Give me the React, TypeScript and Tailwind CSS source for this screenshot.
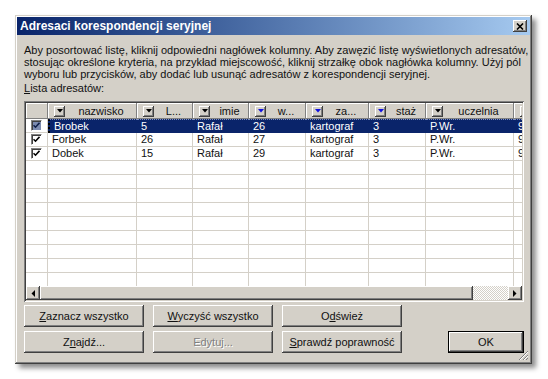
import React from "react";

const raised =
  "shadow-[inset_-1px_-1px_0_#404040,inset_1px_1px_0_#ffffff,inset_-2px_-2px_0_#808080,inset_2px_2px_0_#d4d0c8]";

type Col = { label: string; w: string; filtered: boolean };

const cols: Col[] = [
  { label: "nazwisko", w: "w-[89px]", filtered: false },
  { label: "L...", w: "w-[56px]", filtered: false },
  { label: "imie", w: "w-[56px]", filtered: false },
  { label: "w...", w: "w-[57px]", filtered: true },
  { label: "za...", w: "w-[63px]", filtered: true },
  { label: "staż", w: "w-[57px]", filtered: true },
  { label: "uczelnia", w: "w-[88px]", filtered: false },
  { label: "", w: "w-[40px]", filtered: false },
];

const rows = [
  ["Brobek", "5", "Rafał", "26", "kartograf", "3", "P.Wr.", "9"],
  ["Forbek", "26", "Rafał", "27", "kartograf", "3", "P.Wr.", "9"],
  ["Dobek", "15", "Rafał", "29", "kartograf", "3", "P.Wr.", "9"],
];

function DropBtn({ filtered }: { filtered: boolean }) {
  return (
    <span className="flex h-[11px] w-[11px] shrink-0 items-center justify-center bg-[#d4d0c8] shadow-[inset_-1px_-1px_0_#404040,inset_1px_1px_0_#ffffff,inset_-2px_-2px_0_#808080]">
      <svg width="6" height="4" viewBox="0 0 6 4">
        <path d="M0 0h6L3 3.5z" fill={filtered ? "#1010e0" : "#000"} />
      </svg>
    </span>
  );
}

function Check({ selected }: { selected: boolean }) {
  return (
    <span
      className={`flex h-[11px] w-[11px] items-center justify-center border border-[#808080] border-r-white border-b-white shadow-[inset_1px_1px_0_#404040] ${
        selected ? "bg-[#7d8cb0]" : "bg-white"
      }`}
    >
      <svg width="7" height="7" viewBox="0 0 7 7">
        <path d="M0.5 3.2l2 2 4-4.4" stroke={selected ? "#10204a" : "#000"} strokeWidth="1.6" fill="none" />
      </svg>
    </span>
  );
}

function Btn({ children, className = "" }: { children: React.ReactNode; className?: string }) {
  return (
    <button type="button" className={`flex h-[22px] w-[120px] items-center justify-center bg-[#d4d0c8] ${raised} ${className}`}>
      {children}
    </button>
  );
}

function Arrow({ dir }: { dir: "left" | "right" }) {
  return (
    <div className={`flex h-[14px] w-[14px] shrink-0 items-center justify-center bg-[#d4d0c8] ${raised}`}>
      <svg width="4" height="7" viewBox="0 0 4 7">
        <path d={dir === "left" ? "M4 0v7L0.5 3.5z" : "M0 0v7L3.5 3.5z"} fill="#000" />
      </svg>
    </div>
  );
}

export default function App() {
  const empty = Array.from({ length: 9 });
  return (
    <div className="h-[379px] w-[548px] overflow-hidden bg-white pt-[15px] pl-[15px] font-['Liberation_Sans','DejaVu_Sans',sans-serif] text-[11px] text-[#111]">
      <div className="relative h-[349px] w-[517px] bg-[#d4d0c8] p-[2px] shadow-[inset_-1px_-1px_0_#404040,inset_1px_1px_0_#d4d0c8,inset_-2px_-2px_0_#808080,inset_2px_2px_0_#ffffff,4px_4px_5px_rgba(0,0,0,0.45)]">
        {/* title bar */}
        <div className="flex h-[18px] items-center justify-between bg-linear-to-r from-[#0a246a] to-[#a6caf0] pr-[3px] pl-[3px]">
          <span className="text-[12px] font-bold leading-none text-white">Adresaci korespondencji seryjnej</span>
          <span className={`flex h-[12px] w-[14px] items-center justify-center bg-[#d4d0c8] ${raised}`}>
            <svg width="8" height="7" viewBox="0 0 8 7">
              <path d="M1 0.5l6 6M7 0.5l-6 6" stroke="#000" strokeWidth="1.6" />
            </svg>
          </span>
        </div>

        <div className="pr-[6px] pl-[7px]">
          <div className="pt-[9px] leading-[12px] whitespace-nowrap">
            <div>Aby posortować listę, kliknij odpowiedni nagłówek kolumny. Aby zawęzić listę wyświetlonych adresatów,</div>
            <div>stosując określone kryteria, na przykład miejscowość, kliknij strzałkę obok nagłówka kolumny. Użyj pól</div>
            <div>wyboru lub przycisków, aby dodać lub usunąć adresatów z korespondencji seryjnej.</div>
          </div>
          <div className="mt-[2px] leading-[12px]">
            <span className="underline">L</span>ista adresatów:
          </div>

          {/* list */}
          <div className="mt-[7px] flex h-[201px] w-[500px] flex-col bg-white p-[2px] shadow-[inset_1px_1px_0_#808080,inset_-1px_-1px_0_#ffffff,inset_2px_2px_0_#404040,inset_-2px_-2px_0_#d4d0c8]">
            <div className="flex h-[16px] shrink-0 overflow-hidden">
              <div className="w-[22px] shrink-0 bg-[#d4d0c8] shadow-[inset_-1px_-1px_0_#808080,inset_1px_1px_0_#ffffff]" />
              {cols.map((c, i) => (
                <div
                  key={i}
                  className={`${c.w} flex shrink-0 items-center bg-[#d4d0c8] pl-[6px] shadow-[inset_-1px_-1px_0_#808080,inset_1px_1px_0_#ffffff]`}
                >
                  <DropBtn filtered={c.filtered} />
                  <span className="flex-1 truncate text-center">{c.label}</span>
                </div>
              ))}
            </div>
            <div className="flex-1 overflow-hidden">
              {rows.map((r, ri) => {
                const sel = ri === 0;
                return (
                  <div key={ri} className="flex h-[14px] overflow-hidden">
                    <div className="flex w-[22px] shrink-0 items-center justify-center border-r border-b border-[#d4d0c8]">
                      <Check selected={sel} />
                    </div>
                    {cols.map((c, ci) => (
                      <div
                        key={ci}
                        className={`${c.w} shrink-0 overflow-hidden pl-[4px] leading-[13px] whitespace-nowrap ${
                          sel
                            ? "border-t border-dotted border-t-[#8090c0] bg-[#0a246a] text-white"
                            : "border-r border-b border-[#d4d0c8]"
                        } ${sel && ci === 0 ? "border-l-2 border-l-black" : ""}`}
                      >
                        {r[ci]}
                      </div>
                    ))}
                  </div>
                );
              })}
              {empty.map((_, ei) => (
                <div key={ei} className="flex h-[14px] overflow-hidden">
                  <div className="w-[22px] shrink-0 border-r border-b border-[#d4d0c8]" />
                  {cols.map((c, ci) => (
                    <div key={ci} className={`${c.w} shrink-0 border-r border-b border-[#d4d0c8]`} />
                  ))}
                </div>
              ))}
            </div>
            <div className="flex h-[14px] shrink-0">
              <Arrow dir="left" />
              <div className={`flex-1 bg-[#d4d0c8] ${raised}`} />
              <div className="w-[35px] shrink-0 bg-[repeating-conic-gradient(#d4d0c8_0_25%,#ffffff_0_50%)] bg-[length:2px_2px]" />
              <Arrow dir="right" />
            </div>
          </div>

          {/* buttons */}
          <div className="mt-[3px] flex gap-[9px]">
            <Btn>
              <span className="underline">Z</span>aznacz wszystko
            </Btn>
            <Btn>
              <span className="underline">W</span>yczyść wszystko
            </Btn>
            <Btn>
              O<span className="underline">d</span>śwież
            </Btn>
          </div>
          <div className="mt-[4px] flex gap-[9px]">
            <Btn>
              Z<span className="underline">n</span>ajdź...
            </Btn>
            <Btn className="text-[#808080] [text-shadow:1px_1px_0_#ffffff]">Edytuj...</Btn>
            <Btn>
              <span className="underline">S</span>prawdź poprawność
            </Btn>
            <button
              type="button"
              className="ml-auto flex h-[22px] w-[76px] items-center justify-center border border-black bg-[#d4d0c8] shadow-[inset_-1px_-1px_0_#404040,inset_1px_1px_0_#ffffff,inset_-2px_-2px_0_#808080]"
            >
              OK
            </button>
          </div>
        </div>

        {/* size grip */}
        <svg className="absolute right-[3px] bottom-[3px]" width="11" height="11" viewBox="0 0 11 11">
          <path d="M10 1L1 10M10 5L5 10M10 8L8 10" stroke="#808080" strokeWidth="1" />
          <path d="M10 2L2 10M10 6L6 10" stroke="#ffffff" strokeWidth="1" />
        </svg>
      </div>
    </div>
  );
}
